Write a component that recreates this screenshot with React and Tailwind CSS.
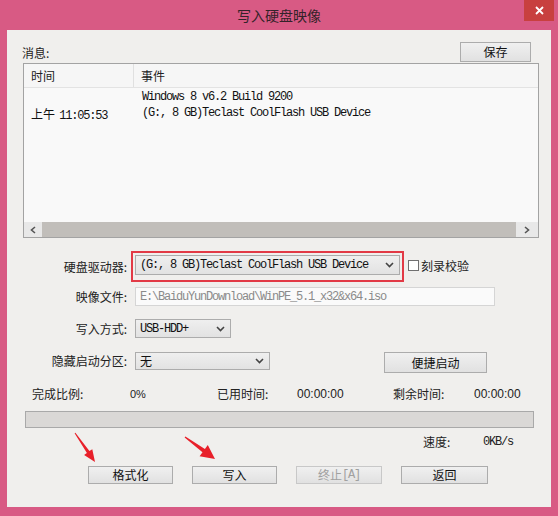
import React from 'react';

const cjk = "font-['Noto_Sans_CJK_SC','Microsoft_YaHei',sans-serif]";
const mono = "font-['Liberation_Mono','Noto_Sans_CJK_SC',monospace] text-[12px] tracking-[-1.2px]";
const num = "font-['Liberation_Sans','Noto_Sans_CJK_SC',sans-serif]";

// 按钮通用样式
const btn =
  'h-[18px] flex items-center justify-center border border-[#acacac] bg-gradient-to-b from-[#f0f0f0] to-[#e1e1e1] text-[12px] leading-none text-[#111]';

const Chevron = () => (
  <svg width="9" height="6" viewBox="0 0 9 6" className="shrink-0">
    <polyline points="1,1 4.5,4.5 8,1" fill="none" stroke="#444" strokeWidth="1.6" />
  </svg>
);

const Combo = ({ text, width, height = 20, cn = mono }) => (
  <div
    className={`flex items-center justify-between border border-[#acacac] bg-gradient-to-b from-[#efefef] to-[#e2e2e2] pl-[4px] pr-[5px] ${width}`}
    style={{ height }}
  >
    <span className={`${cn} leading-none text-[#111] whitespace-nowrap`}>{text}</span>
    <Chevron />
  </div>
);

const Label = ({ children }) => (
  <div className={`${cjk} w-[120px] shrink-0 text-right text-[12px] leading-none text-[#222]`}>{children}</div>
);

export default function App() {
  return (
    <div className="w-[558px] h-[516px] bg-[#d85a84] flex flex-col px-[7px] pb-[9px] select-none">
      {/* 标题栏 */}
      <div className="relative h-[30px] shrink-0 flex items-center justify-center">
        <span className={`${cjk} text-[14px] leading-none text-[#332229]`}>写入硬盘映像</span>
        <div className="absolute top-0 right-[-3px] w-[30px] h-[21px] bg-[#c8403f] flex items-center justify-center">
          <svg width="9" height="9" viewBox="0 0 9 9">
            <path d="M1 1 L8 8 M8 1 L1 8" stroke="#fff" strokeWidth="1.8" />
          </svg>
        </div>
      </div>

      {/* 主体 */}
      <div className="relative flex-1 bg-[#f0efed] flex flex-col">
        {/* 消息 + 保存 */}
        <div className="mt-[12px] h-[21px] flex items-center justify-between pl-[15px] pr-[20px]">
          <span className={`${cjk} text-[12px] leading-none text-[#222]`}>消息:</span>
          <div className={`${btn} ${cjk} w-[71px] !h-[20px] self-start`}>保存</div>
        </div>

        {/* 日志列表 */}
        <div className="ml-[16px] mr-[12px] h-[175px] border border-[#a3a3a3] bg-[#f9f9f9] flex flex-col">
          <div className={`${cjk} h-[24px] shrink-0 flex text-[12px] leading-none text-[#222] border-b border-[#e3e3e3] bg-[#f6f6f6]`}>
            <div className="w-[110px] flex items-center pl-[7px] border-r border-[#e0e0e0]">时间</div>
            <div className="flex items-center pl-[7px]">事件</div>
          </div>
          <div className="flex-1 flex leading-[16px] text-[#111]">
            <div className="w-[111px] pl-[7px] pt-[17px] whitespace-nowrap">
              <span className={`${cjk} text-[12px]`}>上午</span>{' '}
              <span className={mono}>11:05:53</span>
            </div>
            <div className={`${mono} pl-[7px] pt-[1px] whitespace-nowrap`}>
              <div>Windows 8 v6.2 Build 9200</div>
              <div>(G:, 8 GB)Teclast CoolFlash USB Device</div>
            </div>
          </div>
          <div className="h-[15px] shrink-0 flex items-stretch bg-[#e8e8e8]">
            <div className="w-[18px] flex items-center justify-center">
              <svg width="6" height="8" viewBox="0 0 6 8">
                <polyline points="5,1 1.5,4 5,7" fill="none" stroke="#555" strokeWidth="1.6" />
              </svg>
            </div>
            <div className="flex-1 bg-[#c1beba]" />
            <div className="w-[22px] flex items-center justify-center">
              <svg width="6" height="8" viewBox="0 0 6 8">
                <polyline points="1,1 4.5,4 1,7" fill="none" stroke="#555" strokeWidth="1.6" />
              </svg>
            </div>
          </div>
        </div>

        {/* 硬盘驱动器（红框标注） */}
        <div className="mt-[13px] flex items-center">
          <Label>硬盘驱动器:</Label>
          <div className="ml-[4px] bg-[#e23a46] p-[2px]">
            <div className="bg-[#f0efed] pt-[2px] pb-[5px] px-[2px]">
              <Combo text="(G:, 8 GB)Teclast CoolFlash USB Device" width="w-[265px]" />
            </div>
          </div>
          <div className="ml-[4px] mb-[2px] w-[11px] h-[11px] border border-[#707070] bg-white" />
          <span className={`${cjk} ml-[2px] mb-[2px] text-[12px] leading-none text-[#222]`}>刻录校验</span>
        </div>

        {/* 映像文件 */}
        <div className="mt-[5px] flex items-center">
          <Label>映像文件:</Label>
          <div className="ml-[8px] w-[360px] h-[19px] border border-[#d5d5d5] bg-[#fafafa] flex items-center pl-[4px]">
            <span className={`${mono} leading-none text-[#8a8a8a] whitespace-nowrap`}>
              E:\BaiduYunDownload\WinPE_5.1_x32&amp;x64.iso
            </span>
          </div>
        </div>

        {/* 写入方式 */}
        <div className="mt-[13px] flex items-center">
          <Label>写入方式:</Label>
          <div className="ml-[8px]">
            <Combo text="USB-HDD+" width="w-[96px]" height={19} />
          </div>
        </div>

        {/* 隐藏启动分区 */}
        <div className="mt-[14px] flex items-start">
          <div className="h-[18px] flex items-center">
            <Label>隐藏启动分区:</Label>
          </div>
          <div className="ml-[8px]">
            <Combo text="无" width="w-[135px]" height={18} cn={`${cjk} text-[12px]`} />
          </div>
          <div className={`${btn} ${cjk} ml-[114px] w-[103px] !h-[21px]`}>便捷启动</div>
        </div>

        {/* 进度信息 */}
        <div className="mt-[13px] h-[16px] flex items-center pl-[25px] text-[12px] leading-none text-[#222]">
          <span className={`${cjk} w-[98px]`}>完成比例:</span>
          <span className={`${num} w-[87px] text-[11px]`}>0%</span>
          <span className={`${cjk} w-[80px]`}>已用时间:</span>
          <span className={`${num} w-[96px]`}>00:00:00</span>
          <span className={`${cjk} w-[81px]`}>剩余时间:</span>
          <span className={num}>00:00:00</span>
        </div>

        <div className="mt-[9px] ml-[18px] w-[509px] h-[17px] border border-[#a9a9a9] bg-[#dad8d6]" />

        <div className="mt-[6px] h-[16px] flex items-center pl-[416px] text-[#222]">
          <span className={`${cjk} w-[60px] text-[12px] leading-none`}>速度:</span>
          <span className={`${mono} leading-none`}>0KB/s</span>
        </div>

        {/* 底部按钮 */}
        <div className={`${cjk} mt-[16px] flex gap-[19px] pl-[81px]`}>
          <div className={`${btn} w-[85px]`}>格式化</div>
          <div className={`${btn} w-[85px]`}>写入</div>
          <div className={`${btn} w-[86px] !text-[#a0a0a0] border-[#c8c8c8]`}>
            终止<span className={mono}>[A]</span>
          </div>
          <div className={`${btn} w-[87px]`}>返回</div>
        </div>

        {/* 红色箭头标注 */}
        <svg className="absolute inset-0 pointer-events-none" width="540" height="477">
          <polygon
            points="67.6,403.3 79.9,422.9 77.1,424.9 88,432 85.3,419.2 82.4,421.1 68.4,402.7"
            fill="#e8202a"
          />
          <polygon
            points="177.6,407.6 195.5,422.3 192.6,426.3 208,429 200.8,415.1 197.9,419.1 178.4,406.4"
            fill="#e8202a"
          />
        </svg>
      </div>
    </div>
  );
}
